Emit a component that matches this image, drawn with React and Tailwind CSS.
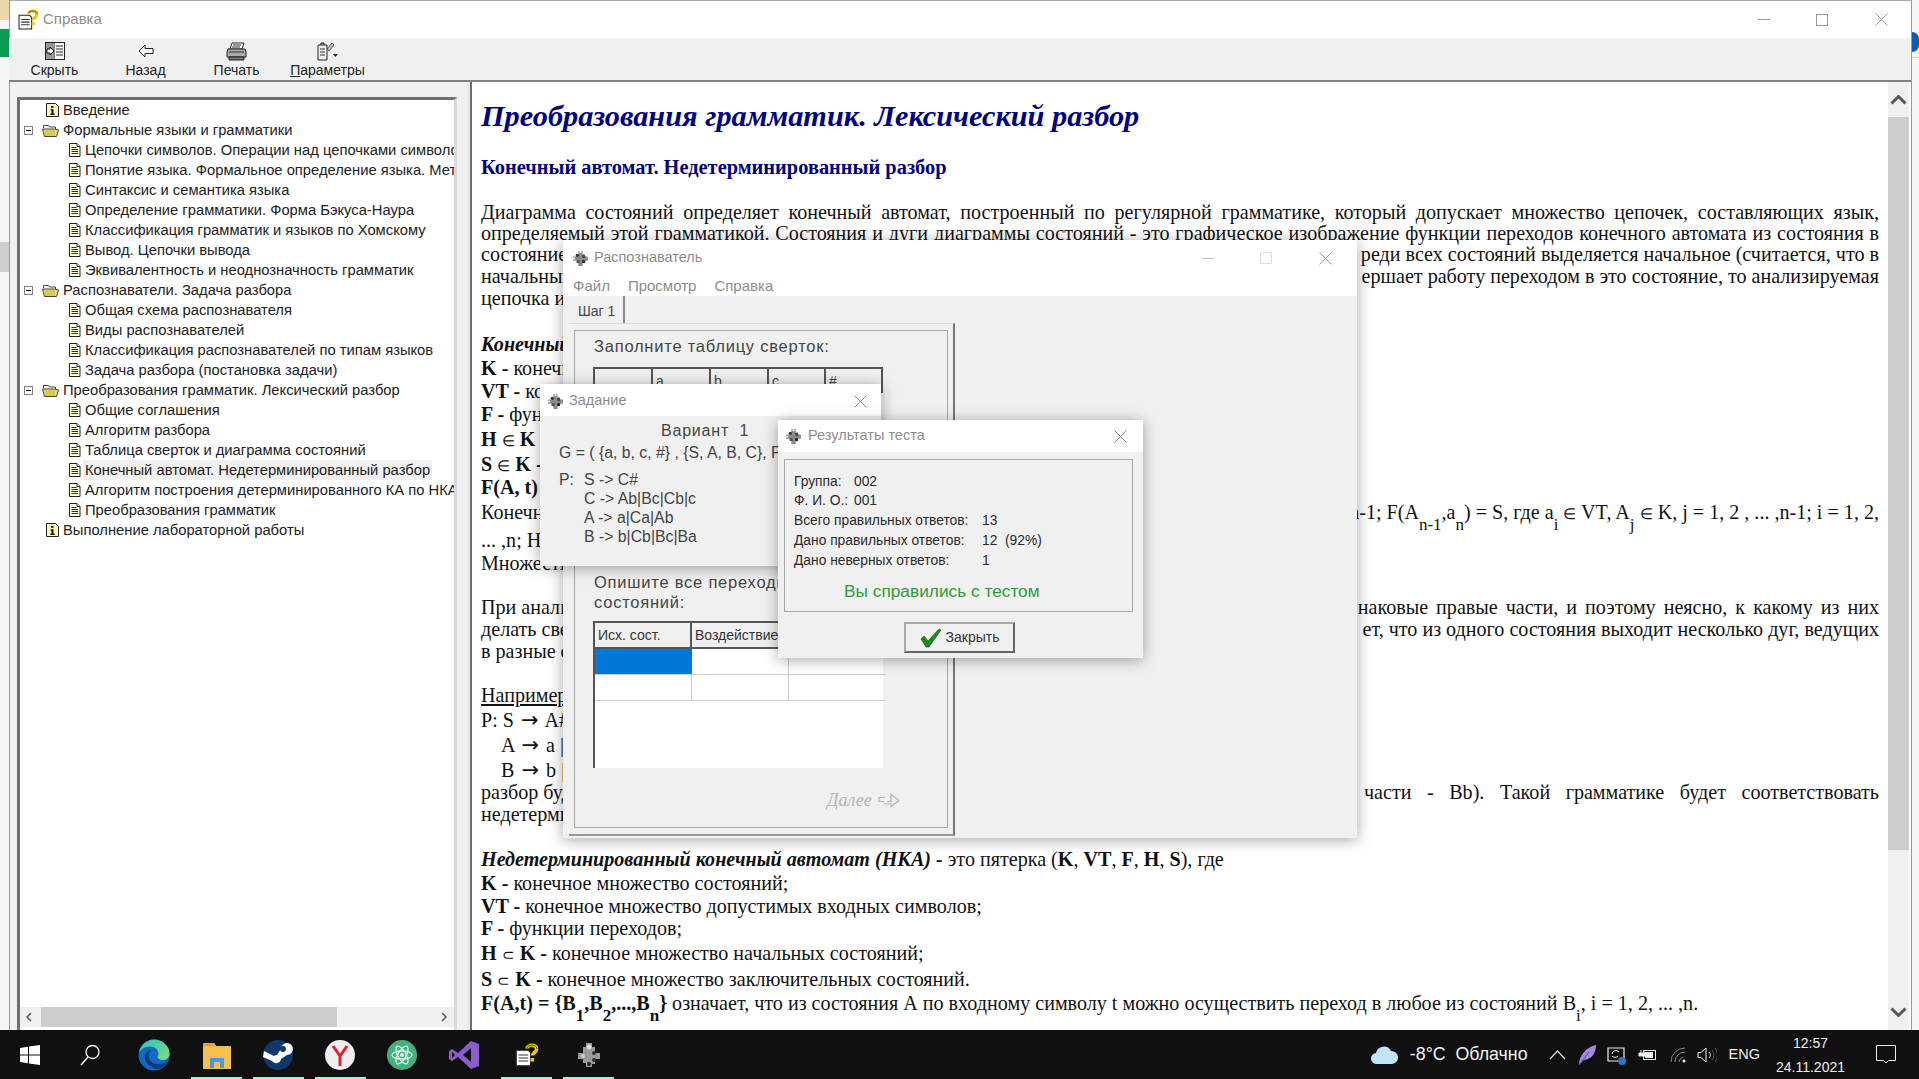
import React from "react";

const sans = "font-['Liberation_Sans',Arial,sans-serif]";
const serif = "font-['Liberation_Serif','Times_New_Roman',serif]";

function DocIcon() {
  return (
    <svg width="13" height="14" viewBox="0 0 13 14" className="shrink-0">
      <path d="M1.5 .5H9l3 3v10H1.5z" fill="#fffde0" stroke="#222" />
      <path d="M9 .5v3h3" fill="#fff" stroke="#222" />
      <path d="M3.5 4.5h5M3.5 6.5h6.5M3.5 8.5h6.5M3.5 10.5h6.5" stroke="#2020a0" />
    </svg>
  );
}
function InfoIcon() {
  return (
    <svg width="13" height="14" viewBox="0 0 13 14" className="shrink-0">
      <path d="M.5.5H9.5l3 3v10H.5z" fill="#fbf6b0" stroke="#222" />
      <path d="M5 3h2.5v1.8H5zM4.5 6.2h3v4.6h1.2v1.2H4.2v-1.2h1.2V7.4H4.500z" fill="#111" />
    </svg>
  );
}
function FolderOpen() {
  return (
    <svg width="17" height="14" viewBox="0 0 17 14" className="shrink-0">
      <path d="M1.5 5V2.5h5l1 1.5h6v2" fill="#f4f4e4" stroke="#444" />
      <path d="M.5 6h12l4 1-2 6.5H2.500z" fill="#e6db6e" stroke="#444" />
      <path d="M3 8h10M3 10h10M3 12h10" stroke="#c9ba3a" />
    </svg>
  );
}
function Expander() {
  return (
    <span className="w-[9px] h-[9px] border border-[#808080] bg-white flex items-center justify-center shrink-0">
      <span className="w-[5px] h-px bg-black" />
    </span>
  );
}
function TreeRow({ kind, children, selected }) {
  if (kind === "folder")
    return (
      <div className="h-5 flex items-center pl-1">
        <Expander />
        <span className="ml-[9px]"><FolderOpen /></span>
        <span className="ml-[4px]">{children}</span>
      </div>
    );
  if (kind === "info")
    return (
      <div className="h-5 flex items-center pl-[26px]">
        <InfoIcon />
        <span className="ml-1">{children}</span>
      </div>
    );
  return (
    <div className="h-5 flex items-center pl-[48px]">
      <DocIcon />
      <span className={selected ? "ml-[2px] px-[2px] h-5 leading-5 bg-[#f0f0f0]" : "ml-[2px] px-[2px] h-5 leading-5"}>{children}</span>
    </div>
  );
}

function Gear({ size = 16 }) {
  return (
    <svg width={size} height={size} viewBox="0 0 16 16" className="shrink-0">
      <path d="M6 1h4v3h2v2h3v4h-3v2h-2v3H6v-3H4v-2H1V6h3V4h2z" fill="#8a8a8a" />
      <circle cx="5" cy="5" r="1.5" fill="#333" />
      <circle cx="11" cy="6" r="1.5" fill="#444" />
      <circle cx="6" cy="11" r="1.5" fill="#555" />
      <circle cx="11" cy="11" r="1.5" fill="#222" />
      <circle cx="8" cy="2" r="1" fill="#fff" />
      <circle cx="2" cy="8" r="1" fill="#fff" />
    </svg>
  );
}
function CloseX({ color = "#888" }) {
  return (
    <svg width="13" height="13" viewBox="0 0 13 13">
      <path d="M.5.5l12 12M12.5.5l-12 12" stroke={color} strokeWidth="1" />
    </svg>
  );
}
function HelpIcon({ size = 20 }) {
  return (
    <svg width={size} height={size} viewBox="0 0 20 20" className="shrink-0">
      <path d="M1 6h10l2 2v11H1z" fill="#fff" stroke="#222" />
      <path d="M3 10h8M3 12.5h8M3 15h8" stroke="#333" />
      <path d="M10 4.5c0-3 8-4 8 .5 0 3-3.5 3-3.5 5.5" fill="none" stroke="#f2c800" strokeWidth="3" />
      <rect x="13" y="12.5" width="3" height="3" fill="#f2c800" />
      <path d="M10 4c.5-2.5 8-3.5 8.500 1" fill="none" stroke="#222" strokeWidth=".7" />
    </svg>
  );
}

function ToolBtn({ icon, label }) {
  return (
    <div className="w-[91px] h-full flex flex-col items-center pt-[3px]">
      <div className="h-[20px] flex items-center justify-center">{icon}</div>
      <div className="mt-[1px] text-[14px] leading-[17px] text-[#222] whitespace-nowrap">{label}</div>
    </div>
  );
}

function Row({ h, children, className = "" }) {
  return <div className={`${h} leading-[22px] whitespace-nowrap ${className}`}>{children}</div>;
}
function Split({ h, left, right, rightClass = "" }) {
  return (
    <div className={`${h} leading-[22px] whitespace-nowrap flex justify-between`}>
      <span>{left}</span>
      <span className={rightClass}>{right}</span>
    </div>
  );
}
const Sub = ({ children }) => <sub className="text-[17px] align-[-7px] leading-none">{children}</sub>;
const Sym = ({ children }) => <span className="text-[15px] font-normal">{children}</span>;
const Arr = () => <span className="font-['DejaVu_Sans',sans-serif] text-[21px] leading-none mx-[2px]">→</span>;

function Hdr({ children, className = "" }) {
  return (
    <div className={`bg-[#f0f0f0] border-r-2 border-b-2 border-[#555] pl-[3px] text-[14px] leading-[24px] text-[#333] whitespace-nowrap overflow-hidden ${className}`}>
      {children}
    </div>
  );
}

export default function App() {
  return (
    <div className={`relative w-[1919px] h-[1079px] overflow-hidden flex flex-col bg-[#f4f4f4] ${sans}`}>
      <div className="flex-1 flex min-h-0">
        {/* desktop strip left */}
        <div className="w-[9px] flex flex-col bg-[#f6f6f6]">
          <div className="h-[20px] bg-[#ecd9a8]" />
          <div className="h-[9px]" />
          <div className="h-[28px] bg-[#0a9c50]" />
          <div className="h-[185px]" />
          <div className="h-[30px] bg-[#cfcfcf]" />
        </div>

        {/* help window */}
        <div className="flex-1 min-w-0 flex flex-col border-t border-[#aaa] border-l border-r border-l-[#999] border-r-[#999] bg-white">
          <div className="h-[37px] shrink-0 flex items-center pl-[8px] relative bg-white">
            <HelpIcon size={21} />
            <span className="ml-[4px] text-[15px] text-[#8c8c8c]">Справка</span>
            <div className="ml-auto flex items-center">
              <svg width="12" height="1" className="mr-[46px]"><rect width="12" height="1" fill="#999" /></svg>
              <svg width="12" height="12" className="mr-[47px]"><rect x=".5" y=".5" width="11" height="11" fill="none" stroke="#999" /></svg>
              <span className="mr-[23px] flex"><CloseX color="#999" /></span>
            </div>
          </div>
          <div className="h-[44px] shrink-0 bg-[#f0f0f0] border-b-2 border-[#808080] flex -ml-[1px]">
            <ToolBtn label="Скрыть" icon={
              <svg width="20" height="18" viewBox="0 0 20 18"><rect x=".5" y=".5" width="19" height="17" fill="#f4f4f4" stroke="#222" /><rect x="1" y="1" width="7" height="16" fill="#999" /><path d="M9 .5v17" stroke="#222" /><path d="M11 4h7M11 7h7M11 10h7M11 13h7" stroke="#333" /><path d="M2 7h3V5l4 4-4 4v-2H2z" fill="#fff" stroke="#111" /></svg>
            } />
            <ToolBtn label="Назад" icon={
              <svg width="16" height="14" viewBox="0 0 16 14"><path d="M7 1L1 7l6 6V9.500h8v-5H7z" fill="#fff" stroke="#222" /></svg>
            } />
            <ToolBtn label="Печать" icon={
              <svg width="21" height="19" viewBox="0 0 21 19"><path d="M6 1h12l-2 6H4z" fill="#fff" stroke="#222" /><path d="M2 7h17l1 3v5H1v-5z" fill="#aaa" stroke="#222" /><path d="M3 15h15v3H3z" fill="#777" stroke="#222" /><path d="M7 3h8M6 5h8M3 10h15" stroke="#333" /></svg>
            } />
            <ToolBtn label={<span><span className="underline">П</span>араметры</span>} icon={
              <svg width="21" height="19" viewBox="0 0 21 19"><path d="M1 3h9v15H1z" fill="#f0f0f0" stroke="#222" /><path d="M3 7h5M3 10h5M3 13h5" stroke="#333" /><path d="M4 3V1h3v2" fill="#888" stroke="#222" /><path d="M10 7l5-6 2 2-5 6z" fill="#bbb" stroke="#555" /><path d="M16 12h5l-2.500 3z" fill="#222" /></svg>
            } />
          </div>

          <div className="flex-1 flex min-h-0">
            {/* tree panel */}
            <div className="w-[460px] shrink-0 bg-[#f0f0f0] pl-[7px] pr-[10px] pt-[15px] flex flex-col border-r-[3px] border-[#e8e8e8]">
              <div className="flex-1 min-h-0 flex flex-col border-[3px] border-b-0 border-t-[#6f6f6f] border-l-[#6f6f6f] border-r-[#d8d8d8] bg-white">
                <div className="flex-1 min-h-0 overflow-hidden text-[14.750px] text-[#222] whitespace-nowrap">
                  <TreeRow kind="info">Введение</TreeRow>
                  <TreeRow kind="folder">Формальные языки и грамматики</TreeRow>
                  <TreeRow>Цепочки символов. Операции над цепочками символов</TreeRow>
                  <TreeRow>Понятие языка. Формальное определение языка. Метод</TreeRow>
                  <TreeRow>Синтаксис и семантика языка</TreeRow>
                  <TreeRow>Определение грамматики. Форма Бэкуса-Наура</TreeRow>
                  <TreeRow>Классификация грамматик и языков по Хомскому</TreeRow>
                  <TreeRow>Вывод. Цепочки вывода</TreeRow>
                  <TreeRow>Эквивалентность и неоднозначность грамматик</TreeRow>
                  <TreeRow kind="folder">Распознаватели. Задача разбора</TreeRow>
                  <TreeRow>Общая схема распознавателя</TreeRow>
                  <TreeRow>Виды распознавателей</TreeRow>
                  <TreeRow>Классификация распознавателей по типам языков</TreeRow>
                  <TreeRow>Задача разбора (постановка задачи)</TreeRow>
                  <TreeRow kind="folder">Преобразования грамматик. Лексический разбор</TreeRow>
                  <TreeRow>Общие соглашения</TreeRow>
                  <TreeRow>Алгоритм разбора</TreeRow>
                  <TreeRow>Таблица сверток и диаграмма состояний</TreeRow>
                  <TreeRow selected>Конечный автомат. Недетерминированный разбор</TreeRow>
                  <TreeRow>Алгоритм построения детерминированного КА по НКА</TreeRow>
                  <TreeRow>Преобразования грамматик</TreeRow>
                  <TreeRow kind="info">Выполнение лабораторной работы</TreeRow>
                </div>
                <div className="h-[20px] mb-[3px] shrink-0 bg-[#f0f0f0] flex items-center">
                  <svg width="21" height="20" viewBox="0 0 21 20" className="shrink-0"><path d="M11 6l-4 4 4 4" fill="none" stroke="#555" strokeWidth="1.500" /></svg>
                  <div className="w-[296px] h-full bg-[#cdcdcd]" />
                  <svg width="21" height="20" viewBox="0 0 21 20" className="shrink-0 ml-auto"><path d="M9 6l4 4-4 4" fill="none" stroke="#555" strokeWidth="1.500" /></svg>
                </div>
              </div>
            </div>

            {/* content */}
            <div className="flex-1 min-w-0 flex border-l-2 border-[#6f6f6f] bg-white">
              <div className={`w-[1416px] shrink-0 pl-[9px] pr-[9px] pt-[16px] overflow-hidden text-[20.100px] text-[#111] ${serif}`}>
                <div className="h-[58px] leading-[36px] text-[30.300px] font-bold italic text-[#000080] whitespace-nowrap">Преобразования грамматик. Лексический разбор</div>
                <div className="h-[45px] leading-[22px] text-[20.400px] font-bold text-[#000080] whitespace-nowrap">Конечный автомат. Недетерминированный разбор</div>
                <div className="h-[21px] leading-[22px] text-justify [text-align-last:justify]">Диаграмма состояний определяет конечный автомат, построенный по регулярной грамматике, который допускает множество цепочек, составляющих язык,</div>
                <div className="h-[21px] leading-[22px] text-justify [text-align-last:justify]">определяемый этой грамматикой. Состояния и дуги диаграммы состояний - это графическое изображение функции переходов конечного автомата из состояния в</div>
                <Split h="h-[22px]" left="состояние" right="реди всех состояний выделяется начальное (считается, что в" />
                <Split h="h-[22px]" left="начальным" right="ершает работу переходом в это состояние, то анализируемая" />
                <Row h="h-[46px]">цепочка и</Row>
                <Row h="h-[24px]" className="font-bold italic">Конечный автомат</Row>
                <Row h="h-[23px]"><b>K -</b> конечное множество состояний;</Row>
                <Row h="h-[23px]"><b>VT -</b> конечное множество допустимых входных символов;</Row>
                <Row h="h-[25px]"><b>F -</b> функции переходов;</Row>
                <Row h="h-[25px]"><b>H <Sym>∈</Sym> K -</b> конечное множество начальных состояний;</Row>
                <Row h="h-[23px]"><b>S <Sym>∈</Sym> K -</b> конечное множество заключительных состояний;</Row>
                <Row h="h-[25px]"><b>F(A, t)</b> - функция переходов автомата</Row>
                <Split h="h-[28px]" left="Конечный автомат" right={<>n-1; F(A<Sub>n-1</Sub>,a<Sub>n</Sub>) = S, где a<Sub>i</Sub> <Sym>∈</Sym> VT, A<Sub>j</Sub> <Sym>∈</Sym> K, j = 1, 2 , ... ,n-1; i = 1, 2,</>} />
                <Row h="h-[23px]">... ,n; Н</Row>
                <Row h="h-[44px]">Множество</Row>
                <Split h="h-[22px]" left="При анализе" right="наковые правые части, и поэтому неясно, к какому из них" rightClass="[word-spacing:3px]" />
                <Split h="h-[22px]" left="делать свертку" right="ет, что из одного состояния выходит несколько дуг, ведущих" />
                <Row h="h-[44px]">в разные состояния</Row>
                <Row h="h-[25px]"><span className="underline">Например</span></Row>
                <Row h="h-[25px]">P: S <Arr /> A#</Row>
                <Row h="h-[25px]" className="pl-[20px]">A <Arr /> a |</Row>
                <Row h="h-[22px]" className="pl-[20px]">B <Arr /> b |</Row>
                <Split h="h-[22px]" left="разбор будет" right="части - Bb). Такой грамматике будет соответствовать" rightClass="[word-spacing:10.500px]" />
                <Row h="h-[45px]">недетерминированным</Row>
                <Row h="h-[24px]"><b className="italic">Недетерминированный конечный автомат (НКА) -</b> это пятерка (<b>K</b>, <b>VT</b>, <b>F</b>, <b>H</b>, <b>S</b>), где</Row>
                <Row h="h-[23px]"><b>K -</b> конечное множество состояний;</Row>
                <Row h="h-[22px]"><b>VT -</b> конечное множество допустимых входных символов;</Row>
                <Row h="h-[25px]"><b>F -</b> функции переходов;</Row>
                <Row h="h-[26px]"><b>H <Sym>⊂</Sym> K -</b> конечное множество начальных состояний;</Row>
                <Row h="h-[24px]"><b>S <Sym>⊂</Sym> K -</b> конечное множество заключительных состояний.</Row>
                <Row h="h-[24px]"><b>F(A,t) = {'{'}B<Sub>1</Sub>,B<Sub>2</Sub>,...,B<Sub>n</Sub>{'}'}</b> означает, что из состояния А по входному символу t можно осуществить переход в любое из состояний B<Sub>i</Sub>, i = 1, 2, ... ,n.</Row>
              </div>
              <div className="w-[21px] shrink-0 bg-[#f0f0f0] flex flex-col items-center">
                <div className="h-[35px] flex items-center justify-center">
                  <svg width="17" height="11" viewBox="0 0 17 11"><path d="M1.500 9.500L8.500 2.500l7 7" fill="none" stroke="#555" strokeWidth="3" /></svg>
                </div>
                <div className="h-[733px] w-full bg-[#cdcdcd]" />
                <div className="mt-auto h-[28px] flex items-center justify-center pb-[8px]">
                  <svg width="17" height="11" viewBox="0 0 17 11"><path d="M1.500 1.500l7 7 7-7" fill="none" stroke="#555" strokeWidth="3" /></svg>
                </div>
              </div>
              <div className="w-[2px] bg-white" />
            </div>
          </div>
        </div>

        {/* desktop strip right */}
        <div className="w-[7px] flex flex-col bg-[#f6f6f6] overflow-hidden">
          <div className="h-[32px]" />
          <div className="w-[7px] h-[20px] bg-[#0a5cad] rounded-r-full" />
          <div className="h-[5px]" />
          <div className="h-px bg-[#ccc]" />
        </div>
      </div>

      {/* taskbar */}
      <div className="h-[49px] shrink-0 bg-[#101010] flex items-center relative text-white">
        <div className="w-[60px] flex justify-center">
          <svg width="20" height="20" viewBox="0 0 20 20"><path d="M0 3l8-1.200v7.700H0zM9 1.600L20 0v9.500H9zM0 10.500h8v7.700L0 17zM9 10.500h11V20L9 18.400z" fill="#fff" /></svg>
        </div>
        <div className="w-[60px] flex justify-center">
          <svg width="20" height="22" viewBox="0 0 20 22"><circle cx="12.500" cy="8" r="6.500" fill="none" stroke="#fff" strokeWidth="1.300" /><path d="M8 13L1 21" stroke="#fff" strokeWidth="1.500" /></svg>
        </div>
        <div className="w-[34px] ml-[17px] flex justify-center">
          <svg width="32" height="32" viewBox="0 0 32 32">
            <defs><linearGradient id="e1" x1="0" y1="0" x2="1" y2="1"><stop offset="0" stopColor="#2fc1c0" /><stop offset="1" stopColor="#7ee07a" /></linearGradient></defs>
            <circle cx="16" cy="16" r="15.500" fill="#0f6bc4" />
            <path d="M1 14C3 4 11 .5 16 .5c9 0 15.500 7 15.500 14 0 4-3 6.500-7 6.500-3 0-5-1.500-5-3 0-1 1-1.500 1-3.500 0-4-4-7-8-7C7 7.500 3 10 1 14z" fill="url(#e1)" />
            <path d="M13 27c-4-1-7-6-6-11 1-3 4-5 7-5-3 2-4 5-3 8 1 4 5 6 9 6 4 0 7-1 10-4-2 5-6 9-11 9-2 0-4-1-6-3z" fill="#083a7a" />
          </svg>
        </div>
        <div className="w-[28px] ml-[32px] flex justify-center">
          <svg width="28" height="28" viewBox="0 0 28 28"><path d="M0 2h11l2 3h15v23H0z" fill="#f2c14e" /><path d="M0 2h11l2 3H0z" fill="#e0a52c" /><path d="M7 27V17h14v10h-4v-6h-6v6z" fill="#3f9fe0" /></svg>
        </div>
        <div className="w-[30px] ml-[32px] flex justify-center">
          <svg width="30" height="30" viewBox="0 0 30 30"><circle cx="15" cy="15" r="15" fill="#11386b" /><path d="M0 17l9 4a5 5 0 0 0 9-2l6-4a6 6 0 1 0-6-6l-4 6a5 5 0 0 0-3 1L1 11z" fill="#fff" /><circle cx="20" cy="9" r="3" fill="#11386b" /></svg>
        </div>
        <div className="w-[30px] ml-[32px] flex justify-center">
          <svg width="30" height="30" viewBox="0 0 30 30"><circle cx="15" cy="15" r="15" fill="#eeeeee" /><path d="M8 6l7 10 7-10M15 16v10" fill="none" stroke="#e0202a" strokeWidth="3" /></svg>
        </div>
        <div className="w-[30px] ml-[32px] flex justify-center">
          <svg width="30" height="30" viewBox="0 0 30 30"><circle cx="15" cy="15" r="15" fill="#44b07e" /><g fill="none" stroke="#d9f5e6" strokeWidth="1.300"><ellipse cx="15" cy="15" rx="10" ry="4" /><ellipse cx="15" cy="15" rx="10" ry="4" transform="rotate(60 15 15)" /><ellipse cx="15" cy="15" rx="10" ry="4" transform="rotate(120 15 15)" /></g><circle cx="15" cy="15" r="2" fill="#d9f5e6" /></svg>
        </div>
        <div className="w-[30px] ml-[32px] flex justify-center">
          <svg width="30" height="30" viewBox="0 0 30 30"><path d="M22 1l8 3v22l-8 3-13-12-6 4-3-2V11l3-2 6 4z" fill="#8a5ccc" /><path d="M22 8l-8 7 8 7z" fill="#101010" /><path d="M3 12v6l3-3z" fill="#101010" /></svg>
        </div>
        <div className="w-[24px] ml-[36px] flex justify-center"><HelpIcon size={24} /></div>
        <div className="w-[24px] ml-[38px] flex justify-center">
          <svg width="24" height="26" viewBox="0 0 24 26"><path d="M9 1h6v4h3v6h5v6h-5v5h-3v3H9v-4H6v-4H1V11h5V5h3z" fill="#9a9a9a" /><circle cx="12" cy="5" r="2.500" fill="#dfdfdf" /><circle cx="6" cy="14" r="2" fill="#ccc" /><circle cx="17" cy="11" r="2" fill="#333" /><circle cx="17" cy="18" r="2" fill="#333" /><circle cx="12" cy="22" r="2" fill="#222" /></svg>
        </div>

        <div className="absolute left-[191px] bottom-0 w-[51px] h-[2px] bg-[#a9ecd0]" />
        <div className="absolute left-[253px] bottom-0 w-[51px] h-[2px] bg-[#a9ecd0]" />
        <div className="absolute left-[315px] bottom-0 w-[51px] h-[2px] bg-[#a9ecd0]" />
        <div className="absolute left-[501px] bottom-0 w-[51px] h-[2px] bg-[#a9ecd0]" />
        <div className="absolute left-[563px] bottom-0 w-[51px] h-[2px] bg-[#a9ecd0]" />

        {/* tray */}
        <div className="ml-auto flex items-center h-full pr-[23px]">
          <svg width="27" height="20" viewBox="0 0 27 20"><path d="M6 19a5.500 5.500 0 0 1-1-11 8 8 0 0 1 15-2 6.500 6.500 0 0 1 1 13z" fill="#bfe3f7" /></svg>
          <span className="ml-[12px] text-[17.800px] text-[#f2f2f2] whitespace-nowrap">-8°C&nbsp; Облачно</span>
          <svg width="17" height="10" viewBox="0 0 17 10" className="ml-[21px]"><path d="M1 9l7.500-8L16 9" fill="none" stroke="#ddd" strokeWidth="1.200" /></svg>
          <svg width="18" height="22" viewBox="0 0 18 22" className="ml-[12px]"><path d="M1 21C1 12 8 3 18 1c0 8-4 14-12 15z" fill="#a88be0" /><path d="M1 21L11 8" stroke="#5a3d9a" /></svg>
          <svg width="20" height="20" viewBox="0 0 20 20" className="ml-[11px]"><path d="M1 3h16v13H1z" fill="none" stroke="#eee" strokeWidth="1.200" /><path d="M5 9a4 4 0 0 1 7-2M11 11a4 4 0 0 1-6 0" fill="none" stroke="#eee" /><circle cx="15" cy="16" r="4" fill="#2a78c8" /></svg>
          <svg width="20" height="12" viewBox="0 0 20 12" className="ml-[10px]"><path d="M4 4V1M7 4V1M2 4h7v3H2z" stroke="#eee" fill="#eee" /><rect x="6.500" y="1.500" width="12" height="9" fill="none" stroke="#eee" /><rect x="8" y="3" width="8" height="6" fill="#eee" /></svg>
          <svg width="16" height="16" viewBox="0 0 16 16" className="ml-[13px]"><path d="M1 15A14 14 0 0 1 15 1M5 15A10 10 0 0 1 15 5M9 15A6 6 0 0 1 13 10" fill="none" stroke="#8a8a8a" /><circle cx="14" cy="14" r="1.500" fill="#eee" /></svg>
          <svg width="20" height="16" viewBox="0 0 20 16" className="ml-[11px]"><path d="M1 5.500h3L9 1v14L4 10.500H1z" fill="none" stroke="#eee" /><path d="M12 5a4 4 0 0 1 0 6" fill="none" stroke="#ccc" /><path d="M15 3a8 8 0 0 1 0 10M18 1a11 11 0 0 1 0 14" fill="none" stroke="#555" /></svg>
          <span className="ml-[12px] text-[14.500px] text-[#eee]">ENG</span>
          <div className="ml-[16px] w-[69px] flex flex-col items-center text-[14px] leading-[24px] text-[#eee]">
            <span>12:57</span>
            <span>24.11.2021</span>
          </div>
          <svg width="20" height="19" viewBox="0 0 20 19" className="ml-[31px]"><path d="M.5.5h19v15h-7l-2.500 2.500L7.500 15.500h-7z" fill="none" stroke="#eee" /></svg>
        </div>
      </div>

      {/* Recogniser window */}
      <div className="absolute left-[563px] top-[240px] w-[794px] h-[598px] flex flex-col bg-[#f0f0f0] shadow-[0_2px_14px_rgba(0,0,0,0.35)]">
        <div className="h-[36px] shrink-0 bg-white flex items-center pl-[9px]">
          <Gear size={17} />
          <span className="ml-[5px] text-[14.500px] text-[#8c8c8c]">Распознаватель</span>
          <div className="ml-auto flex items-center">
            <svg width="12" height="1" className="mr-[46px]"><rect width="12" height="1" fill="#bbb" /></svg>
            <svg width="12" height="12" className="mr-[47px]"><rect x=".5" y=".5" width="11" height="11" fill="none" stroke="#ddd" /></svg>
            <span className="mr-[25px] flex"><CloseX color="#999" /></span>
          </div>
        </div>
        <div className="h-[20px] pt-[1px] shrink-0 bg-white flex items-start text-[15px] leading-[18px] text-[#8c8c8c] pl-[10px]">
          <span>Файл</span>
          <span className="ml-[18px]">Просмотр</span>
          <span className="ml-[18px]">Справка</span>
        </div>
        <div className="flex-1 min-h-0 pl-[6px]">
          <div className="h-[27px] w-[56px] pt-[3px] border-r-2 border-[#888] flex items-center pl-[9px] text-[14px] text-[#444]">Шаг 1</div>
          <div className="w-[386px] h-[513px] border-t border-r-2 border-b-2 border-t-[#ddd] border-r-[#777] border-b-[#999] pl-[5px] pt-[6px] bg-[#f0f0f0]">
            <div className="w-[374px] h-[498px] border border-[#a8a8a8] pl-[19px] text-[#444] flex flex-col">
              <div className="h-[36px] pt-[5px] text-[16.500px] leading-[20px] tracking-[0.77px] whitespace-nowrap">Заполните таблицу сверток:</div>
              <div className="w-[290px] -ml-[1px] h-[24px] border-t-2 border-l-2 border-[#555] grid grid-cols-[58px_58px_58px_57px_57px] text-[14px] leading-[24px]">
                <div className="border-r-2 border-[#555]" />
                <div className="border-r-2 border-[#555] pl-[3px]">a</div>
                <div className="border-r-2 border-[#555] pl-[3px]">b</div>
                <div className="border-r-2 border-[#555] pl-[3px]">c</div>
                <div className="border-r-2 border-[#555] pl-[3px]">#</div>
              </div>
              <div className="h-[181px]" />
              <div className="h-[49px] text-[16.500px] leading-[20px] tracking-[0.77px] whitespace-nowrap">
                Опишите все переходы<br />состояний:
              </div>
              <div className="w-[290px] -ml-[1px] h-[147px] border-t-2 border-l-2 border-[#555] bg-white">
                <div className="grid grid-cols-[97px_97px_97px] h-[26px]">
                  <Hdr>Исх. сост.</Hdr><Hdr>Воздействие</Hdr><Hdr>Рез. сост.</Hdr>
                </div>
                <div className="grid grid-cols-[97px_97px_97px] h-[26px]">
                  <div className="bg-[#0078d7] border-b border-[#ccc]" />
                  <div className="border-r border-b border-[#ccc]" />
                  <div className="border-b border-[#ccc]" />
                </div>
                <div className="grid grid-cols-[97px_97px_97px] h-[26px]">
                  <div className="border-r border-b border-[#ccc]" />
                  <div className="border-r border-b border-[#ccc]" />
                  <div className="border-b border-[#ccc]" />
                </div>
              </div>
              <div className={`mt-[19px] ml-[233px] flex items-center text-[18px] italic text-[#b4b4b4] ${serif}`}>
                <span>Далее</span>
                <svg width="22" height="15" viewBox="0 0 22 15" className="ml-[6px]"><path d="M1 4.500h6M1 4.500v4h5M9 8.500h4V1.500l8 6-8 6V11H6" fill="none" stroke="#b4b4b4" strokeWidth="1.200" /></svg>
              </div>
            </div>
          </div>
        </div>
      </div>

      {/* Task dialog */}
      <div className="absolute left-[540px] top-[384px] w-[341px] h-[182px] bg-[#f0f0f0] flex flex-col shadow-[0_2px_14px_rgba(0,0,0,0.35)] text-[#444]">
        <div className="h-[32px] pt-[2px] shrink-0 bg-white flex items-center pl-[7px]">
          <Gear size={17} />
          <span className="ml-[5px] text-[14.500px] text-[#8c8c8c]">Задание</span>
          <span className="ml-auto mr-[14px] flex"><CloseX /></span>
        </div>
        <div className="pl-[19px] text-[15.800px] leading-[19px] whitespace-nowrap overflow-hidden">
          <div className="pl-[102px] pt-[5px] text-[16px] h-[26px] leading-[20px] tracking-[0.8px]">Вариант&nbsp; 1</div>
          <div className="h-[21px] leading-[21px]">G = ( {"{a, b, c, #}"} , {"{S, A, B, C}"}, P, S)</div>
          <div className="mt-[7px] flex">
            <div className="w-[25px]">P:</div>
            <div>
              <div>S -&gt; C#</div>
              <div>C -&gt; Ab|Bc|Cb|c</div>
              <div>A -&gt; a|Ca|Ab</div>
              <div>B -&gt; b|Cb|Bc|Ba</div>
            </div>
          </div>
        </div>
      </div>

      {/* Results dialog */}
      <div className="absolute left-[778px] top-[420px] w-[365px] h-[238px] bg-[#f0f0f0] flex flex-col shadow-[0_2px_14px_rgba(0,0,0,0.35)] text-[#2a2a2a]">
        <div className="h-[32px] shrink-0 bg-white flex items-center pl-[7px]">
          <Gear size={17} />
          <span className="ml-[6px] text-[14.500px] text-[#8c8c8c]">Результаты теста</span>
          <span className="ml-auto mr-[16px] flex"><CloseX /></span>
        </div>
        <div className="ml-[6px] w-[349px] mt-[7px] h-[153px] border border-[#a8a8a8] pl-[9px] pt-[12px] text-[13.800px] leading-[20px] whitespace-nowrap">
          <div className="flex h-[19px]"><span className="w-[60px]">Группа:</span><span>002</span></div>
          <div className="flex h-[20px]"><span className="w-[60px]">Ф. И. О.:</span><span>001</span></div>
          <div className="flex h-[20px]"><span className="w-[188px]">Всего правильных ответов:</span><span>13</span></div>
          <div className="flex h-[20px]"><span className="w-[188px]">Дано правильных ответов:</span><span>12&nbsp; (92%)</span></div>
          <div className="flex h-[20px]"><span className="w-[188px]">Дано неверных ответов:</span><span>1</span></div>
          <div className="mt-[10px] pl-[50px] text-[17.300px] text-[#2e9a3a]">Вы справились с тестом</div>
        </div>
        <div className="flex justify-center mt-[10px] pr-[2px]">
          <div className="w-[111px] h-[31px] border-2 border-t-[#aaa] border-l-[#aaa] border-r-[#666] border-b-[#666] flex items-center justify-center text-[14px] text-[#333]">
            <svg width="22" height="20" viewBox="0 0 22 20" className="mr-[4px]"><path d="M1 11l3-3 4 5L19 1l2 1L9 19H6z" fill="#1e8a1e" stroke="#0a4a0a" strokeWidth=".6" /></svg>
            Закрыть
          </div>
        </div>
      </div>
    </div>
  );
}
